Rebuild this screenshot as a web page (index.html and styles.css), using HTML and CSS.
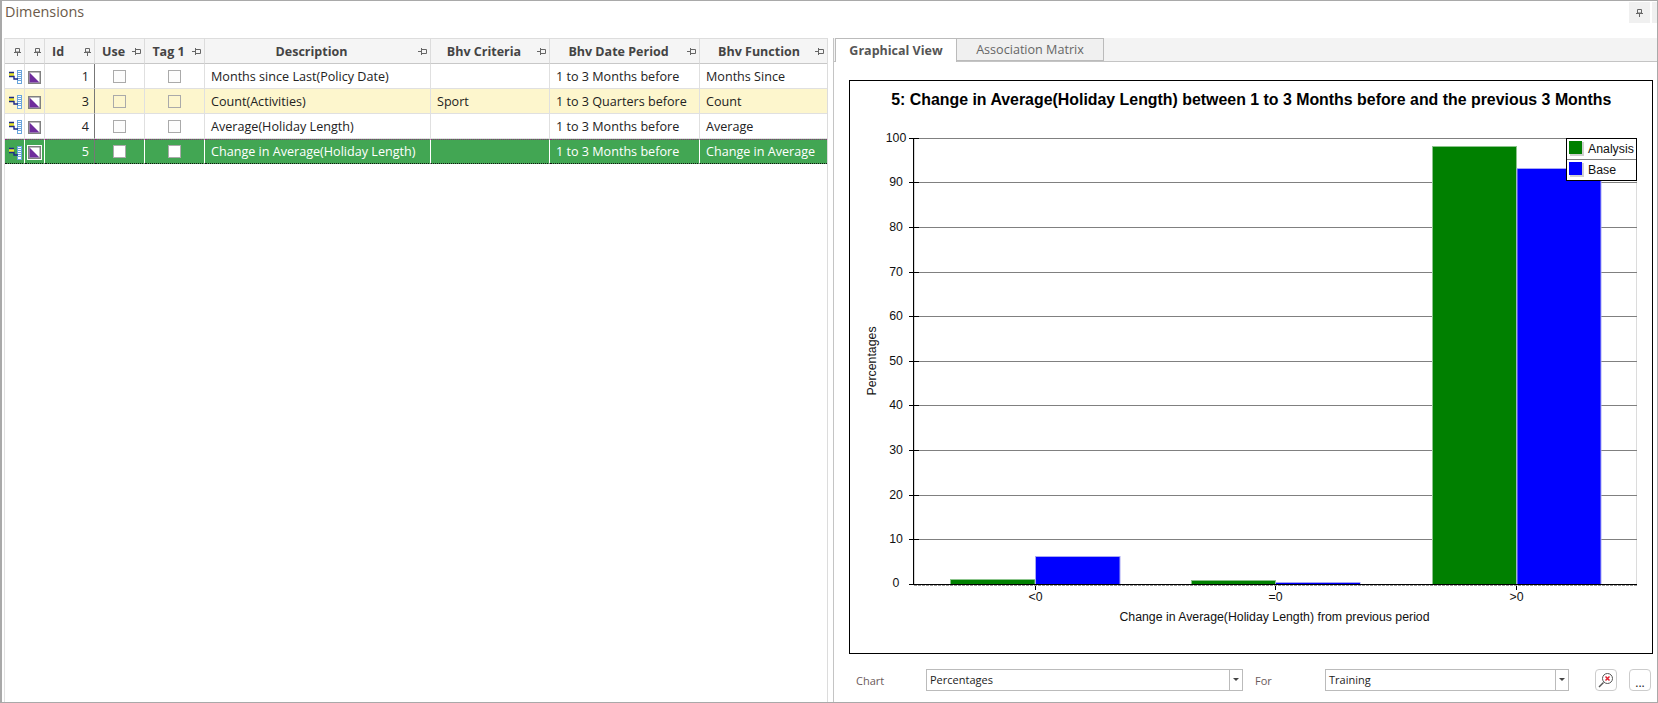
FILE: index.html
```html
<!DOCTYPE html>
<html lang="en">
<head>
  <meta charset="UTF-8" />
  <title>Dimensions</title>
  <link rel="stylesheet" href="styles.css">
</head>
<body>
  <svg class="defs" width="0" height="0">
    <symbol id="pin-v" viewBox="0 0 7 8">
      <path d="M1.5 .5h4v3.5h-4z M0 4.5h7 M3.5 4.5v3.5" fill="none" stroke="currentColor" />
    </symbol>
    <symbol id="pin-h" viewBox="0 0 9 7">
      <path d="M0 3.5h3 M3.5 0v7 M4 1.5h4.5v4H4" fill="none" stroke="currentColor" />
    </symbol>
    <symbol id="tree" viewBox="0 0 14 14">
      <rect x="9.5" y=".5" width="4" height="13" fill="#fff" stroke="#6aa4dc" />
      <path d="M10 2.5h3 M10 4.5h3 M10 6.5h3 M10 8.5h3 M10 10.5h3" stroke="#6aa4dc" />
      <rect x="1" y="2" width="5" height="4" fill="#e8e62e" />
      <path d="M1 2.5h5 M1 6.5h5v2.5h4" fill="none" stroke="#1c2a88" stroke-width="1.4" />
    </symbol>
    <symbol id="shape" viewBox="0 0 13 13">
      <rect x=".75" y=".75" width="11.5" height="11.5" fill="#fff" stroke="#808080" stroke-width="1.5" />
      <path d="M1.5 1.5v10h10z" fill="#6f2c9c" />
    </symbol>
  </svg>

  <div class="window">
    <div class="title-bar">
      <span class="title">Dimensions</span>
      <span class="title-tools">
        <span class="title-btn"><svg class="pin-v"><use href="#pin-v" /></svg></span>
        <span class="title-stub"></span>
      </span>
    </div>

    <div class="panes">
      <div class="grid-pane">
        <table class="grid">
          <colgroup>
            <col class="c20"><col class="c20"><col class="c50"><col class="c50"><col class="c60">
            <col class="c226"><col class="c119"><col class="c150"><col class="c127">
          </colgroup>
          <thead>
            <tr>
              <th class="pin-only"><svg class="pin-v"><use href="#pin-v" /></svg></th>
              <th class="pin-only"><svg class="pin-v"><use href="#pin-v" /></svg></th>
              <th class="left">Id<svg class="pin-v"><use href="#pin-v" /></svg></th>
              <th>Use<svg class="pin-h"><use href="#pin-h" /></svg></th>
              <th>Tag 1<svg class="pin-h"><use href="#pin-h" /></svg></th>
              <th>Description<svg class="pin-h"><use href="#pin-h" /></svg></th>
              <th>Bhv Criteria<svg class="pin-h"><use href="#pin-h" /></svg></th>
              <th>Bhv Date Period<svg class="pin-h"><use href="#pin-h" /></svg></th>
              <th>Bhv Function<svg class="pin-h"><use href="#pin-h" /></svg></th>
            </tr>
          </thead>
          <tbody>
            <tr>
              <td class="icon"><svg class="ico-tree"><use href="#tree" /></svg></td>
              <td class="icon"><svg class="ico-shape"><use href="#shape" /></svg></td>
              <td class="num">1</td>
              <td class="check"><i></i></td>
              <td class="check"><i></i></td>
              <td>Months since Last(Policy Date)</td>
              <td></td>
              <td>1 to 3 Months before</td>
              <td>Months Since</td>
            </tr>
            <tr class="alt">
              <td class="icon"><svg class="ico-tree"><use href="#tree" /></svg></td>
              <td class="icon"><svg class="ico-shape"><use href="#shape" /></svg></td>
              <td class="num">3</td>
              <td class="check"><i></i></td>
              <td class="check"><i></i></td>
              <td>Count(Activities)</td>
              <td>Sport</td>
              <td>1 to 3 Quarters before</td>
              <td>Count</td>
            </tr>
            <tr>
              <td class="icon"><svg class="ico-tree"><use href="#tree" /></svg></td>
              <td class="icon"><svg class="ico-shape"><use href="#shape" /></svg></td>
              <td class="num">4</td>
              <td class="check"><i></i></td>
              <td class="check"><i></i></td>
              <td>Average(Holiday Length)</td>
              <td></td>
              <td>1 to 3 Months before</td>
              <td>Average</td>
            </tr>
            <tr class="selected">
              <td class="icon"><svg class="ico-tree"><use href="#tree" /></svg></td>
              <td class="icon"><svg class="ico-shape framed"><use href="#shape" /></svg></td>
              <td class="num">5</td>
              <td class="check"><i></i></td>
              <td class="check"><i></i></td>
              <td>Change in Average(Holiday Length)</td>
              <td></td>
              <td>1 to 3 Months before</td>
              <td>Change in Average</td>
            </tr>
          </tbody>
        </table>
      </div>

      <div class="chart-pane">
        <div class="tabs">
          <span class="tab active">Graphical View</span>
          <span class="tab">Association Matrix</span>
        </div>

        <div class="chart-frame">
          <svg class="chart" viewBox="850 81 802 572">
            <text class="chart-title" x="1251.3" y="105" text-anchor="middle">5: Change in Average(Holiday Length) between 1 to 3 Months before and the previous 3 Months</text>

            <path class="edge" d="M1636.5 138v446" />
            <path class="axis-shadow" d="M914.5 138v446" />
            <path class="gridline" d="M909 138.5H1637 M909 182.5H1637 M909 227.5H1637 M909 272.5H1637 M909 316.5H1637 M909 361.5H1637 M909 405.5H1637 M909 450.5H1637 M909 495.5H1637 M909 539.5H1637" />

            <rect class="bar-a" x="950.5" y="579.5" width="84.5" height="5" />
            <rect class="bar-b" x="1035.5" y="556.5" width="84.5" height="28" />
            <rect class="bar-a" x="1191.5" y="580.5" width="84" height="4" />
            <rect class="bar-b" x="1276" y="582.5" width="84" height="2" />
            <rect class="bar-a" x="1432.5" y="146.5" width="84" height="438" />
            <rect class="bar-b" x="1517" y="168.5" width="84" height="416" />

            <path class="tick" d="M909 138.5h10 M909 182.5h10 M909 227.5h10 M909 272.5h10 M909 316.5h10 M909 361.5h10 M909 405.5h10 M909 450.5h10 M909 495.5h10 M909 539.5h10 M909 584.5h4" />
            <path class="tick" d="M913.5 138v447 M913 584.5H1637 M1035.5 584v6 M1275.5 584v6 M1516.5 584v6" />
            <path class="axis-dash" d="M914 585.5H1637" />

            <g text-anchor="middle">
              <text x="896" y="142">100</text>
              <text x="896" y="186">90</text>
              <text x="896" y="231">80</text>
              <text x="896" y="276">70</text>
              <text x="896" y="320">60</text>
              <text x="896" y="365">50</text>
              <text x="896" y="409">40</text>
              <text x="896" y="454">30</text>
              <text x="896" y="499">20</text>
              <text x="896" y="543">10</text>
              <text x="896" y="587">0</text>
              <text x="1035.5" y="601">&lt;0</text>
              <text x="1275.5" y="601">=0</text>
              <text x="1516.5" y="601">&gt;0</text>
              <text x="1274.5" y="621">Change in Average(Holiday Length) from previous period</text>
              <text transform="translate(876 361) rotate(-90)">Percentages</text>
            </g>

            <rect class="legend" x="1566.5" y="138.5" width="70" height="42" />
            <path class="legend-sep" d="M1567 159.5H1636" />
            <rect class="swatch-shadow" x="1570" y="142" width="14" height="14" />
            <rect class="swatch-a" x="1569" y="141" width="13" height="13" />
            <rect class="swatch-shadow" x="1570" y="163" width="14" height="14" />
            <rect class="swatch-b" x="1569" y="162" width="13" height="13" />
            <text x="1588" y="153">Analysis</text>
            <text x="1588" y="174">Base</text>
          </svg>
        </div>

        <div class="controls">
          <label class="ctl-label chart-label">Chart</label>
          <div class="combo chart-combo"><span class="combo-text">Percentages</span><span class="combo-arrow"></span></div>
          <label class="ctl-label for-label">For</label>
          <div class="combo for-combo"><span class="combo-text">Training</span><span class="combo-arrow"></span></div>
          <button class="tool-btn zoom-btn">
            <svg width="16" height="16" viewBox="0 0 16 16">
              <circle cx="9.5" cy="6.5" r="5" fill="#fff" stroke="#555" />
              <path d="M5.5 10.5L1 15" stroke="#555" stroke-width="1.5" />
              <path d="M7.5 4.5l4 4 M11.5 4.5l-4 4" stroke="#e02030" stroke-width="1.5" />
            </svg>
          </button>
          <button class="tool-btn more-btn">...</button>
        </div>
      </div>
    </div>
  </div>
</body>
</html>
```

FILE: styles.css
```css
* {
  box-sizing: border-box;
  margin: 0;
  padding: 0;
}

body {
  background: #fff;
  font-family: 'Open Sans', 'Noto Sans', sans-serif;
  font-size: 12.6px;
  color: #222;
  overflow: hidden;
}

.defs {
  display: block;
  height: 0;
}

.window {
  width: 1658px;
  height: 703px;
  display: flex;
  flex-direction: column;
  border: 1px solid #a9a9a9;
  border-left-width: 2px;
}

.title-bar {
  height: 37px;
  flex: none;
  display: flex;
  justify-content: space-between;
  align-items: flex-start;
  padding: 1px 0 0 3px;
}

.title {
  font-size: 14.4px;
  line-height: 20px;
  color: #6b5a4a;
}

.title-tools {
  display: flex;
  gap: 2px;
}

.title-btn {
  width: 21px;
  height: 21px;
  background: #f0f0f0;
  display: flex;
  align-items: center;
  justify-content: center;
  color: #555;
}

.title-stub {
  width: 5px;
  height: 21px;
  background: #f0f0f0;
}

.panes {
  flex: 1;
  display: flex;
  min-height: 0;
}

.grid-pane {
  width: 824px;
  margin-left: 2px;
  border-left: 1px solid #e2e2e2;
  border-right: 1px solid #dcdcdc;
}

.grid {
  table-layout: fixed;
  width: 822px;
  border-collapse: separate;
  border-spacing: 0;
}

.c20 { width: 20px; }
.c50 { width: 50px; }
.c60 { width: 60px; }
.c226 { width: 226px; }
.c119 { width: 119px; }
.c150 { width: 150px; }
.c127 { width: 127px; }

.grid th {
  position: relative;
  height: 26px;
  background: #f5f5f5;
  border-top: 1px solid #ddd;
  border-bottom: 1px solid #c8c8c8;
  border-right: 1px solid #dcdcdc;
  font-size: 12.5px;
  font-weight: 700;
  color: #444;
  text-align: center;
  white-space: nowrap;
  padding-right: 12px;
}

.grid th.pin-only {
  padding: 0;
}

.grid th.left {
  text-align: left;
  padding-left: 7px;
}

.grid th:last-child {
  padding-right: 9px;
  border-right: 0;
}

.pin-v {
  width: 7px;
  height: 8px;
  color: #666;
}

.pin-h {
  width: 9px;
  height: 7px;
  color: #666;
}

.grid th svg {
  position: absolute;
  right: 3px;
  top: 9px;
}

.grid td {
  height: 25px;
  border-bottom: 1px solid #e0e0e0;
  border-right: 1px solid #e0e0e0;
  padding: 1px 0 0 6px;
  white-space: nowrap;
  overflow: hidden;
  color: #222;
}

.grid td:last-child {
  border-right: 0;
}

.grid td.num {
  text-align: right;
  padding: 1px 5px 0 0;
  border-right-color: #777;
}

.grid td.icon {
  padding: 0;
}

.ico-tree {
  display: block;
  width: 14px;
  height: 14px;
  margin: 2px auto 0;
}

.ico-shape {
  display: block;
  width: 13px;
  height: 13px;
  margin: 2px auto 0;
}

.grid td.check {
  padding: 0;
}

.check i {
  display: block;
  width: 13px;
  height: 13px;
  margin: 0 auto;
  border: 1px solid #aaa;
  background: #fcfcfc;
}

.alt td {
  background: #fdf6cd;
}

.alt .check i {
  background: #fdf6cd;
}

.selected td {
  background: #42a653;
  color: #fff;
  padding-top: 0;
  border-top: 1px dotted #8a2c78;
  border-bottom: 1px dotted #111;
  border-right-color: #fff;
}

.selected td.num {
  color: #fff;
  padding-top: 0;
  border-right-color: #777;
}

.selected .check i {
  background: #fff;
}

.framed {
  outline: 1px solid #fff;
}

.chart-pane {
  flex: 1;
  min-width: 0;
  margin-left: 5px;
  border-left: 1px solid #c4c4c4;
  display: flex;
  flex-direction: column;
}

.tabs {
  height: 24px;
  flex: none;
  display: flex;
  padding-left: 1px;
  background: #f3f3f3;
  border-bottom: 1px solid #c4c4c4;
}

.tab {
  width: 147px;
  height: 23px;
  display: flex;
  align-items: center;
  justify-content: center;
  background: #f0f0f0;
  border: 1px solid #bbb;
  border-left: 0;
  color: #666;
}

.tab.active {
  width: 122px;
  height: 24px;
  background: #fff;
  border-left: 1px solid #bbb;
  border-bottom: 0;
  font-size: 12.5px;
  font-weight: 700;
  color: #555;
}

.chart-frame {
  width: 804px;
  height: 574px;
  flex: none;
  margin: 18px 0 0 15px;
  border: 1px solid #000;
}

.chart {
  display: block;
  width: 802px;
  height: 572px;
  font-family: 'Liberation Sans', Arial, sans-serif;
  font-size: 12.3px;
  fill: #111;
}

.chart-title {
  font-size: 15.9px;
  font-weight: 700;
  fill: #000;
}

.gridline {
  stroke: #808080;
  fill: none;
}

.edge {
  stroke: #dcdcdc;
}

.axis-shadow {
  stroke: #d8d8d8;
}

.tick {
  stroke: #000;
  fill: none;
}

.axis-dash {
  stroke: #999;
  stroke-dasharray: 3 1;
}

.bar-a {
  fill: #008000;
  stroke: #8cc48c;
}

.bar-b {
  fill: #0000ff;
  stroke: #a8a8f4;
}

.legend {
  fill: #fff;
  stroke: #000;
}

.legend-sep {
  stroke: #808080;
}

.swatch-shadow {
  fill: #d0d0d0;
}

.swatch-a {
  fill: #008000;
}

.swatch-b {
  fill: #0000ff;
}

.controls {
  flex: 1;
  display: flex;
  align-items: flex-start;
  padding: 15px 0 0 22px;
  font-size: 11px;
}

.ctl-label {
  line-height: 22px;
  margin-top: 1px;
  color: #6b5a5a;
}

.chart-label {
  width: 70px;
}

.for-label {
  width: 70px;
  margin-left: 12px;
}

.combo {
  height: 22px;
  display: flex;
  justify-content: space-between;
  border: 1px solid #bbb;
  background: #fff;
}

.chart-combo {
  width: 317px;
}

.for-combo {
  width: 244px;
}

.combo-text {
  padding-left: 3px;
  line-height: 20px;
  color: #222;
}

.combo-arrow {
  width: 13px;
  position: relative;
  border-left: 1px solid #bbb;
}

.combo-arrow::after {
  content: '';
  position: absolute;
  left: 3px;
  top: 8px;
  border: 3px solid transparent;
  border-top: 3px solid #444;
  border-bottom: 0;
}

.tool-btn {
  width: 22px;
  height: 22px;
  flex: none;
  display: flex;
  align-items: center;
  justify-content: center;
  background: #fff;
  border: 1px solid #ccc;
  border-radius: 4px;
  font-family: inherit;
  font-size: 12px;
  line-height: 1;
  color: #222;
}

.zoom-btn {
  margin-left: 26px;
}

.more-btn {
  margin-left: 12px;
  padding-top: 6px;
}
```
